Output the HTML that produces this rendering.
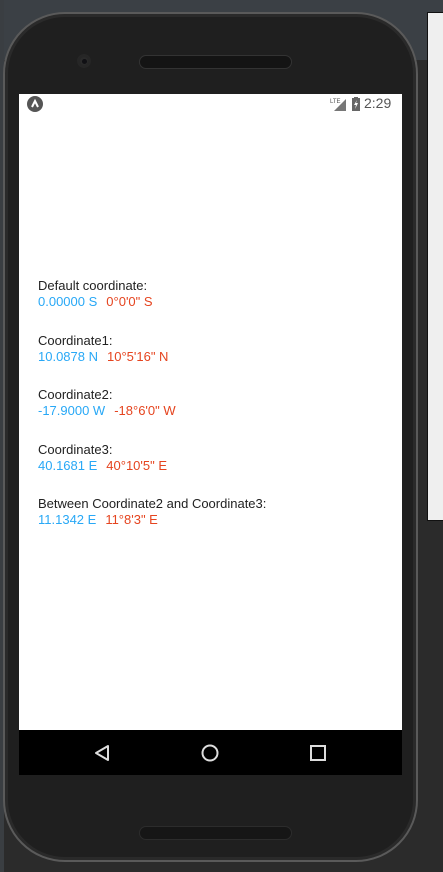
<!DOCTYPE html>
<html><head><style>
*{margin:0;padding:0;box-sizing:border-box}
body{width:443px;height:872px;overflow:hidden;background:#2b2b2b;position:relative;font-family:"Liberation Sans",Roboto,sans-serif}
.bgtop{position:absolute;left:0;top:0;width:443px;height:60px;background:#3b4045}
.bgleft{position:absolute;left:0;top:0;width:4px;height:872px;background:#3a3e42}
.panel{position:absolute;left:427px;top:12px;width:20px;height:509px;background:#efefef;border:1px solid #111}
.phone{position:absolute;left:3px;top:12px;width:415px;height:850px;border-radius:62px;background:#1f1f1f;border:2px solid #5a5a5a;box-shadow:inset 0 0 0 3px #2a2a2a}
.cam{position:absolute;left:72px;top:40px;width:14px;height:14px;border-radius:50%;background:#2a2a2a;border:3px solid #262626}
.cam:after{content:"";position:absolute;left:2px;top:2px;width:5px;height:5px;border-radius:50%;background:#101014}
.spk{position:absolute;left:134px;top:41px;width:153px;height:14px;border-radius:7px;background:#141414;border:1px solid #333}
.spk2{position:absolute;left:134px;top:812px;width:153px;height:14px;border-radius:7px;background:#161616;border:1px solid #2c2c2c}
.screen{position:absolute;left:19px;top:94px;width:383px;height:681px;background:#fff}
.nav{position:absolute;left:0;bottom:0;width:383px;height:45px;background:#000}
.status{position:absolute;left:0;top:0;width:383px;height:20px}
.t{position:absolute;left:19px;font-size:13px;line-height:16px;color:#222}
.b{color:#28a8f6}.r{color:#e5441f;margin-left:9px}
</style></head><body>
<div class="bgtop"></div><div class="bgleft"></div>
<div class="panel"></div>
<div class="phone"><div class="cam"></div><div class="spk"></div><div class="spk2"></div></div>
<div class="screen">
 <div class="status">
  <svg style="position:absolute;left:8px;top:2px" width="16" height="16"><circle cx="8" cy="8" r="8" fill="#555"/><path d="M5 11 L8 5 L11 11" stroke="#fff" stroke-width="2" fill="none"/></svg>
  <svg style="position:absolute;left:311px;top:3px" width="16" height="14"><path d="M4 14 L16 2 L16 14Z" fill="#777"/><text x="0" y="6" font-size="6" fill="#555" font-family="Liberation Sans">LTE</text></svg>
  <svg style="position:absolute;left:333px;top:3px" width="8" height="14"><rect x="0" y="1" width="8" height="13" fill="#666"/><rect x="2" y="0" width="4" height="2" fill="#666"/><path d="M5 3 L2 8 L4 8 L3 12 L6 6 L4 6Z" fill="#fff"/></svg>
  <div style="position:absolute;left:345px;top:1px;font-size:14px;color:#555">2:29</div>
 </div>
 <div class="t" style="top:184px">Default coordinate:<br><span class="b">0.00000 S</span><span class="r">0°0'0" S</span></div>
 <div class="t" style="top:239px">Coordinate1:<br><span class="b">10.0878 N</span><span class="r">10°5'16" N</span></div>
 <div class="t" style="top:293px">Coordinate2:<br><span class="b">-17.9000 W</span><span class="r">-18°6'0" W</span></div>
 <div class="t" style="top:348px">Coordinate3:<br><span class="b">40.1681 E</span><span class="r">40°10'5" E</span></div>
 <div class="t" style="top:402px">Between Coordinate2 and Coordinate3:<br><span class="b">11.1342 E</span><span class="r">11°8'3" E</span></div>
 <div class="nav">
  <svg style="position:absolute;left:74px;top:14px" width="18" height="18"><path d="M15 2 L3 9 L15 16Z" stroke="#ddd" stroke-width="2" fill="none" stroke-linejoin="round"/></svg>
  <svg style="position:absolute;left:181px;top:13px" width="20" height="20"><circle cx="10" cy="10" r="7.5" stroke="#ddd" stroke-width="2" fill="none"/></svg>
  <svg style="position:absolute;left:290px;top:14px" width="18" height="18"><rect x="2" y="2" width="14" height="14" stroke="#ddd" stroke-width="2" fill="none"/></svg>
 </div>
</div>
</body></html>
